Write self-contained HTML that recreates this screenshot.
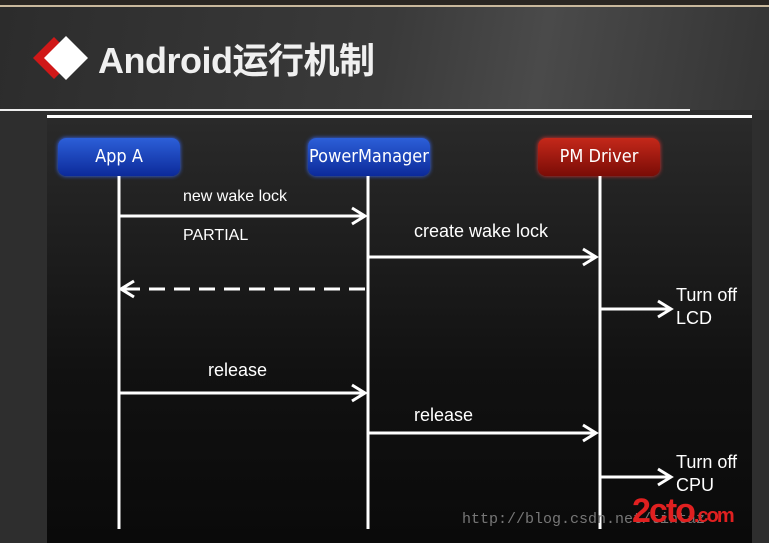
<!DOCTYPE html>
<html><head><meta charset="utf-8"><style>
body{margin:0;width:769px;height:542px;overflow:hidden;background:#2e2e2e;font-family:"Liberation Sans","Noto Sans CJK SC",sans-serif;position:relative}
.top{position:absolute;left:0;top:0;width:769px;height:110px;background:linear-gradient(100deg,#2c2c2c 0%,#3a3a3a 50%,#4a4a4a 70%,#343434 100%)}
.band{position:absolute;left:0;top:0;width:769px;height:5px;background:#2a2622;border-bottom:2px solid #c9b89c}
.title{position:absolute;left:98px;top:32px;color:#f0f0f0;font-size:36px;font-weight:bold;letter-spacing:-0.5px}
.hl{position:absolute;left:0;top:109px;width:690px;height:2px;background:#eee}
.panel{position:absolute;left:47px;top:115px;width:705px;height:425px;background:linear-gradient(180deg,#2a2a2a,#111 60%,#0a0a0a);border-top:3px solid #fff}
.box{position:absolute;top:138px;width:122px;height:38px;border-radius:8px;color:#fff;font-size:18px;text-align:center;line-height:38px;font-family:"Liberation Sans Narrow","DejaVu Sans Condensed",sans-serif}
.b{background:linear-gradient(#2c5fd8,#0c2a9a);box-shadow:0 0 4px #3a6cff}
.r{background:linear-gradient(#c4281a,#7a0c06);box-shadow:0 0 4px #d33}
.t{position:absolute;color:#fff;font-size:18px}
</style></head><body>
<div class="top"></div><div class="band"></div>
<svg style="position:absolute;left:30px;top:36px" width="62" height="44"><polygon points="3,22 24,1 32,9 19,22 32,35 24,43" fill="#d01818"/><polygon points="14,22 36,0 58,22 36,44" fill="#fff"/></svg>
<div class="title">Android运行机制</div>
<div class="hl"></div>
<div class="panel"></div>
<div class="box b" style="left:58px">App A</div>
<div class="box b" style="left:308px">PowerManager</div>
<div class="box r" style="left:538px">PM Driver</div>
<svg style="position:absolute;left:0;top:0" width="769" height="542" stroke="#fff" stroke-width="3" fill="none">
<line x1="119" y1="176" x2="119" y2="529"/><line x1="368" y1="176" x2="368" y2="529"/><line x1="600" y1="176" x2="600" y2="529"/>
<line x1="119" y1="216" x2="364" y2="216"/><polyline points="352,208 365,216 352,224"/>
<line x1="368" y1="257" x2="595" y2="257"/><polyline points="583,249 596,257 583,265"/>
<line x1="124" y1="289" x2="368" y2="289" stroke-dasharray="16,9"/><polyline points="134,281 121,289 134,297"/>
<line x1="600" y1="309" x2="670" y2="309"/><polyline points="658,301 671,309 658,317"/>
<line x1="119" y1="393" x2="364" y2="393"/><polyline points="352,385 365,393 352,401"/>
<line x1="368" y1="433" x2="595" y2="433"/><polyline points="583,425 596,433 583,441"/>
<line x1="600" y1="477" x2="670" y2="477"/><polyline points="658,469 671,477 658,485"/>
</svg>
<div class="t" style="left:183px;top:188px;font-size:16px">new wake lock</div>
<div class="t" style="left:183px;top:227px;font-size:16px">PARTIAL</div>
<div class="t" style="left:414px;top:221px">create wake lock</div>
<div class="t" style="left:676px;top:284px;line-height:23px">Turn off<br>LCD</div>
<div class="t" style="left:208px;top:360px">release</div>
<div class="t" style="left:414px;top:405px">release</div>
<div class="t" style="left:676px;top:451px;line-height:23px">Turn off<br>CPU</div>
<div style="position:absolute;left:462px;top:511px;color:#777;font-family:'Liberation Mono',monospace;font-size:15px">http://blog.csdn.net/tintaz</div>
<div style="position:absolute;left:632px;top:492px;color:#e02020;font-size:34px;font-weight:bold;letter-spacing:-2px">2cto<span style="font-size:20px">.com</span></div>
</body></html>
